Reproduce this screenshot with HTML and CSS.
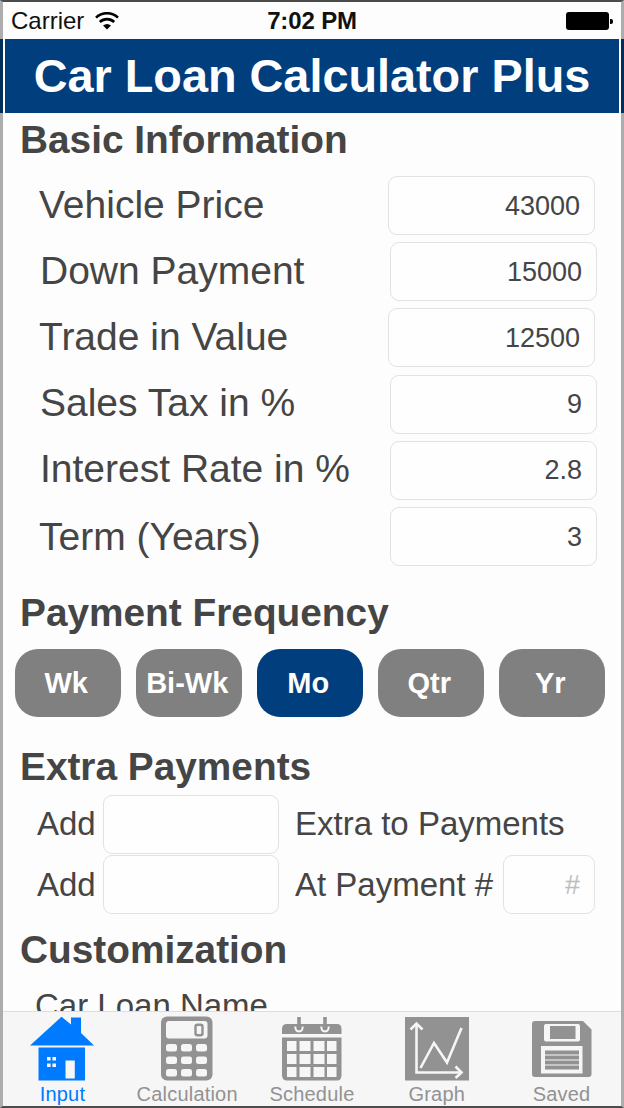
FILE: index.html
```html
<!DOCTYPE html>
<html lang="en">
<head>
  <meta charset="UTF-8">
  <meta name="viewport" content="width=device-width, initial-scale=1.0">
  <title>Car Loan Calculator Plus</title>
  <link rel="stylesheet" href="styles.css">
</head>
<body>
  <div class="screen">
    <div class="status-bar">
      <div class="carrier">
        Carrier
        <svg class="wifi" width="24" height="18" viewBox="0 0 24 18">
          <path d="M1 5.6A16 16 0 0 1 23 5.6" fill="none" stroke="#000" stroke-width="2.6"/>
          <path d="M4.8 10A10.5 10.5 0 0 1 19.2 10" fill="none" stroke="#000" stroke-width="2.6"/>
          <path d="M8 13.6Q12 10.4 16 13.6L12 17.6Z" fill="#000"/>
        </svg>
      </div>
      <div class="time">7:02 PM</div>
      <div class="battery"></div>
    </div>

    <header>
      <h1>Car Loan Calculator Plus</h1>
    </header>

    <main>
      <h2 class="basic">Basic Information</h2>
      <div class="fields">
        <div class="row odd"><label for="price">Vehicle Price</label><input type="text" id="price" value="43000"></div>
        <div class="row"><label for="down">Down Payment</label><input type="text" id="down" value="15000"></div>
        <div class="row odd"><label for="trade">Trade in Value</label><input type="text" id="trade" value="12500"></div>
        <div class="row"><label for="tax">Sales Tax in %</label><input type="text" id="tax" value="9"></div>
        <div class="row"><label for="rate">Interest Rate in %</label><input type="text" id="rate" value="2.8"></div>
        <div class="row last"><label for="term">Term (Years)</label><input type="text" id="term" value="3"></div>
      </div>

      <h2 class="frequency">Payment Frequency</h2>
      <div class="buttons">
        <button type="button">Wk</button>
        <button type="button">Bi-Wk</button>
        <button type="button" class="active">Mo</button>
        <button type="button">Qtr</button>
        <button type="button">Yr</button>
      </div>

      <h2 class="extra">Extra Payments</h2>
      <div class="extra-rows">
        <div class="extra-row">
          <label for="extra1">Add</label>
          <input type="text" id="extra1">
          <span>Extra to Payments</span>
        </div>
        <div class="extra-row">
          <label for="extra2">Add</label>
          <input type="text" id="extra2">
          <span>At Payment #</span>
          <input type="text" class="number" placeholder="#">
        </div>
      </div>

      <h2 class="custom">Customization</h2>
      <div class="name-label">Car Loan Name</div>
    </main>

    <nav>
      <a class="tab active">
        <svg width="64" height="65" viewBox="0 0 64 65">
          <path d="M0 29.5L31.5 .8L41 8.5V1.5H51V17L64 29.5Z" fill="currentColor"/>
          <path d="M8.5 31.5H55V64.5H8.5Z" fill="currentColor"/>
          <path d="M17 41h3.6v3.6h-3.6zM22.4 41h3.6v3.6h-3.6zM17 47.4h3.6v3.6h-3.6zM22.4 47.4h3.6v3.6h-3.6zM35.5 44.5h9.3v18h-9.3z" fill="#f6f6f6"/>
        </svg>
        <span>Input</span>
      </a>
      <a class="tab">
        <svg width="64" height="65" viewBox="0 0 64 65">
          <rect x="6" y=".5" width="51.5" height="64" rx="6" fill="currentColor"/>
          <rect x="11" y="5" width="41.5" height="17.5" rx="3" fill="#f6f6f6"/>
          <rect x="40.5" y="8.8" width="7" height="10.4" rx="2" fill="none" stroke="currentColor" stroke-width="2.4"/>
          <g fill="#f6f6f6">
            <rect x="11" y="28" width="11" height="7.5" rx="2.5"/>
            <rect x="26" y="28" width="11" height="7.5" rx="2.5"/>
            <rect x="41" y="28" width="11" height="7.5" rx="2.5"/>
            <rect x="11" y="40.5" width="11" height="7.5" rx="2.5"/>
            <rect x="26" y="40.5" width="11" height="7.5" rx="2.5"/>
            <rect x="41" y="40.5" width="11" height="7.5" rx="2.5"/>
            <rect x="11" y="53" width="11" height="7.5" rx="2.5"/>
            <rect x="26" y="53" width="11" height="7.5" rx="2.5"/>
            <rect x="41" y="53" width="11" height="7.5" rx="2.5"/>
          </g>
        </svg>
        <span>Calculation</span>
      </a>
      <a class="tab">
        <svg width="64" height="65" viewBox="0 0 64 65">
          <path d="M2 18V13Q2 8 7 8H57Q61.5 8 61.5 13V18Z" fill="currentColor"/>
          <path d="M2 21.5H61.5V59Q61.5 64.5 57 64.5H7Q2 64.5 2 59Z" fill="currentColor"/>
          <g fill="none" stroke="#f6f6f6" stroke-width="2">
            <path d="M15.5 10.500A3.7 3.7 0 1 0 22.5 10.500"/>
            <path d="M41.5 10.500A3.7 3.7 0 1 0 48.5 10.500"/>
          </g>
          <path d="M19 1V14M45 1V14" stroke="currentColor" stroke-width="3.6"/>
          <path d="M7 25h9.5v10h-9.5zM19.5 25h11v10h-11zM33.5 25h11v10h-11zM47 25h9.5v10h-9.500zM7 38h9.5v10h-9.5zM19.5 38h11v10h-11zM33.5 38h11v10h-11zM47 38h9.5v10h-9.500zM7 51h9.5v10h-9.5zM19.5 51h11v10h-11zM33.5 51h11v10h-11zM47 51h9.5v10h-9.500z" fill="#f6f6f6"/>
        </svg>
        <span>Schedule</span>
      </a>
      <a class="tab">
        <svg width="64" height="65" viewBox="0 0 64 65">
          <rect x="0" y="1" width="64" height="63.5" fill="currentColor"/>
          <g fill="none" stroke="#f6f6f6" stroke-width="2.6">
            <path d="M11.500 8V56.500H55"/>
            <path d="M5.500 13.500L11.500 7.500L17.500 13.500M50.500 50.500L56.500 56.500L50.500 62"/>
            <path d="M15.500 52L29 27L42 46.500L56.500 12"/>
          </g>
        </svg>
        <span>Graph</span>
      </a>
      <a class="tab">
        <svg width="64" height="65" viewBox="0 0 64 65">
          <path d="M5 5H53L61.5 13.5V58Q61.5 61 58.5 61H5Q2 61 2 58V8Q2 5 5 5Z" fill="currentColor"/>
          <rect x="14" y="8" width="36" height="17.5" rx="2" fill="#f6f6f6"/>
          <rect x="20" y="10" width="25.5" height="13" fill="currentColor"/>
          <path d="M11 30H52.5V57.5H11Z" fill="#f6f6f6"/>
          <path d="M15 36.5H49M15 41.5H49M15 46.5H49M15 51.5H49" stroke="currentColor" stroke-width="3.8"/>
        </svg>
        <span>Saved</span>
      </a>
    </nav>
  </div>
</body>
</html>
```
FILE: styles.css
```css
* {
  margin: 0;
  padding: 0;
  box-sizing: border-box;
}

body {
  font-family: "Liberation Sans", Arial, sans-serif;
  background-color: #fdfdfd;
  color: #454545;
}

.screen {
  position: relative;
  width: 624px;
  height: 1108px;
  padding-top: 2px;
  overflow: hidden;
}

/* window edge */
.screen::after {
  content: "";
  position: absolute;
  inset: 0;
  border: 3px solid #adadad;
  border-top: 2px solid #4c4c4c;
  border-bottom: 2px solid #4c4c4c;
  pointer-events: none;
}

.status-bar {
  display: flex;
  justify-content: space-between;
  align-items: center;
  height: 37px;
  padding: 0 11px;
  color: #111;
  font-size: 24px;
  line-height: 37px;
}

.carrier {
  display: flex;
  align-items: center;
  gap: 11px;
  width: 150px;
}

.time {
  font-weight: bold;
  letter-spacing: -0.15px;
}

.battery {
  position: relative;
  width: 43px;
  height: 18px;
  margin: 0 4px 0 103px;
  background-color: #000;
  border-radius: 3px;
}

.battery::after {
  content: "";
  position: absolute;
  right: -4px;
  top: 7px;
  width: 3px;
  height: 5px;
  border-radius: 0 2px 2px 0;
  background-color: #000;
}

header {
  position: relative;
  z-index: 1;
  height: 74px;
  padding: 0 2px;
  border: solid #002d5b;
  border-width: 0 3px;
}

h1 {
  height: 74px;
  background-color: #003e7e;
  color: #fff;
  font-size: 46.8px;
  line-height: 75px;
  text-align: center;
  white-space: nowrap;
}

main {
  height: 898px;
  overflow: hidden;
}

h2 {
  height: 46px;
  margin-left: 20px;
  font-size: 38.8px;
  line-height: 46px;
}

.basic {
  margin-top: 4px;
}

.frequency {
  margin-top: 20px;
}

.extra {
  margin-top: 27px;
}

.custom {
  margin-top: 12px;
}

input {
  height: 59px;
  padding: 1px 14px 0;
  border: 1px solid #e2e2e2;
  border-radius: 9px;
  background-color: #fefefe;
  color: #454545;
  font-family: inherit;
  font-size: 27px;
  text-align: right;
}

input::placeholder {
  color: #bdbdbd;
}

.fields {
  margin-top: 9.5px;
}

.row {
  display: flex;
  justify-content: space-between;
  align-items: center;
  height: 66.2px;
  padding: 0 27px 0 40px;
}

.row.odd {
  padding: 0 29px 0 39px;
}

.row.last {
  padding-left: 39px;
}

.row label {
  padding-bottom: 2px;
  font-size: 39px;
}

.row.last label {
  padding: 1px 0 0;
}

.row input {
  width: 207px;
}

.buttons {
  display: flex;
  gap: 15.5px;
  margin: 13.5px 19px 0 15px;
}

button {
  width: 105.5px;
  height: 68px;
  padding-right: 3px;
  border: none;
  border-radius: 23px;
  background-color: #808080;
  color: #fff;
  font-family: inherit;
  font-size: 29px;
  font-weight: bold;
}

button.active {
  background-color: #003e7e;
}

.extra-rows {
  margin-top: 4px;
}

.extra-row {
  display: flex;
  align-items: center;
  height: 60.5px;
  padding-left: 37px;
  font-size: 33px;
}

.extra-row label {
  width: 66px;
}

.extra-row input {
  width: 176px;
  margin-right: 16px;
}

.extra-row .number {
  width: 92px;
  margin: 0 0 0 10px;
}

.name-label {
  margin: 13px 0 0 35px;
  font-size: 33px;
  line-height: 40px;
}

nav {
  display: flex;
  height: 97px;
  padding-top: 4px;
  background-color: #f6f6f6;
  border-top: 1px solid #dedede;
}

.tab {
  display: flex;
  flex: 1;
  flex-direction: column;
  align-items: center;
  color: #929292;
  font-size: 20px;
  line-height: 26px;
  letter-spacing: 0.2px;
}

.tab svg {
  flex: none;
}

.tab.active {
  color: #007aff;
}
```
